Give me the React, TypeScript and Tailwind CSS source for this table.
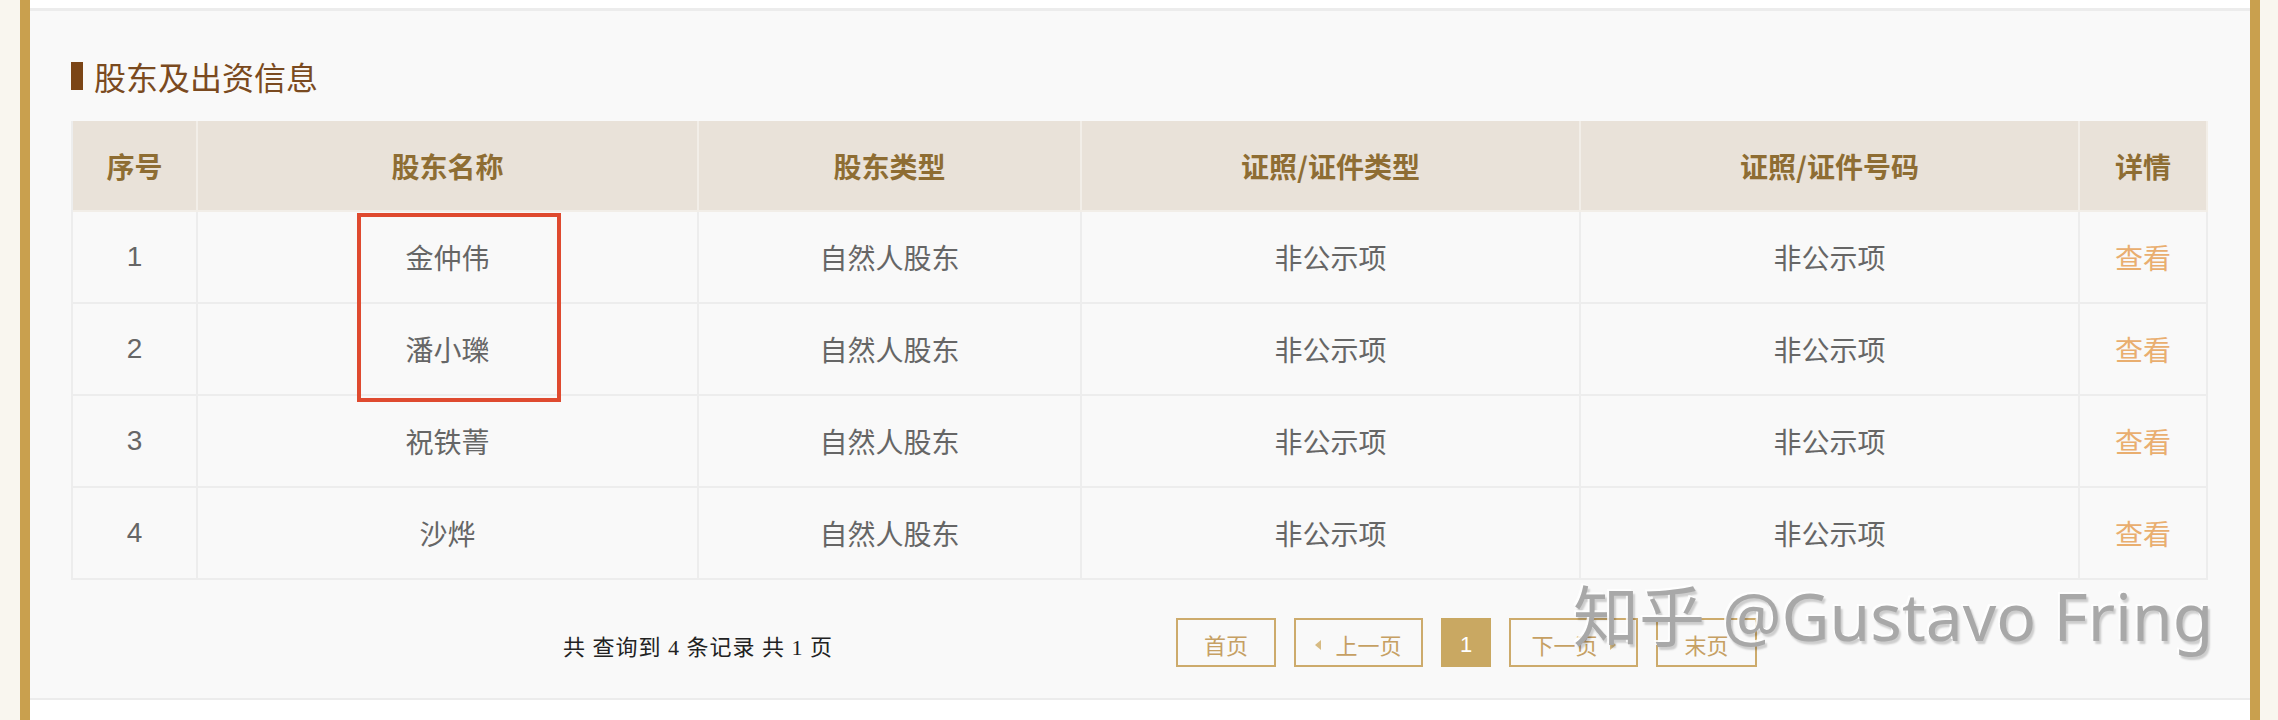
import React from "react";

const headers = ["序号", "股东名称", "股东类型", "证照/证件类型", "证照/证件号码", "详情"];
const rows = [
  ["1", "金仲伟"],
  ["2", "潘小瓅"],
  ["3", "祝铁菁"],
  ["4", "沙烨"],
];

function PrevTri() {
  return (
    <svg width="6" height="10" viewBox="0 0 6 10" className="mr-[14px]">
      <polygon points="6,0 0,5 6,10" fill="#d7bb83" />
    </svg>
  );
}
function NextTri() {
  return (
    <svg width="6" height="10" viewBox="0 0 6 10" className="ml-[12px]">
      <polygon points="0,0 6,5 0,10" fill="#d7bb83" />
    </svg>
  );
}

export default function App() {
  const cjk = { fontFamily: '"Noto Sans CJK SC", "Noto Sans", sans-serif' };
  return (
    <div className="relative flex h-[720px] w-[2278px] overflow-hidden bg-[#f9f6ef]" style={cjk}>
      <div className="w-[20px] shrink-0 bg-[#f9f6ef]" />
      <div className="w-[10px] shrink-0 bg-[#c9a04e]" />
      <div className="flex w-[2220px] shrink-0 flex-col bg-[#f9f9f9]">
        <div className="h-[8px] bg-white" />
        <div className="h-[3px] bg-[#ececec]" />
        <div className="flex h-[687px] flex-col px-[41px] pt-[50px]">
          <div className="flex h-[30px] items-center">
            <div className="h-[28px] w-[12px] bg-[#7b4516]" />
            <div className="ml-[11px] text-[32px] leading-[30px] text-[#7a4a20]">股东及出资信息</div>
          </div>
          <div className="relative mt-[30px] w-[2137px] border-l-2 border-[#ededed]">
            <div className="grid grid-cols-[125px_501px_383px_499px_499px_128px]">
              {headers.map((h) => (
                <div
                  key={h}
                  className="flex h-[91px] items-center justify-center border-r-2 border-b-2 border-[#f2eee8] bg-[#e9e2d9] text-[28px] font-bold text-[#8e6d33]"
                >
                  {h}
                </div>
              ))}
              {rows.map(([n, name]) => (
                <React.Fragment key={n}>
                  <div className="flex h-[92px] items-center justify-center border-r-2 border-b-2 border-[#ededed] text-[28px] text-[#666666]" style={{ fontFamily: '"Liberation Sans", Arial, sans-serif' }}>
                    {n}
                  </div>
                  <div className="flex h-[92px] items-center justify-center border-r-2 border-b-2 border-[#ededed] text-[28px] text-[#666666]">
                    {name}
                  </div>
                  <div className="flex h-[92px] items-center justify-center border-r-2 border-b-2 border-[#ededed] text-[28px] text-[#666666]">
                    自然人股东
                  </div>
                  <div className="flex h-[92px] items-center justify-center border-r-2 border-b-2 border-[#ededed] text-[28px] text-[#666666]">
                    非公示项
                  </div>
                  <div className="flex h-[92px] items-center justify-center border-r-2 border-b-2 border-[#ededed] text-[28px] text-[#666666]">
                    非公示项
                  </div>
                  <div className="flex h-[92px] items-center justify-center border-r-2 border-b-2 border-[#ededed] text-[28px] text-[#e9ae6f]">
                    查看
                  </div>
                </React.Fragment>
              ))}
            </div>
            <div className="absolute left-[284px] top-[92px] h-[189px] w-[204px] border-4 border-[#df4a2f]" />
          </div>
          <div className="mt-[38px] flex h-[49px] items-center pl-[492px]">
            <div className="w-[613px] pt-[10px] text-[22px] tracking-[1px] text-[#222222]" style={{ fontFamily: '"Liberation Serif", "Noto Sans CJK SC", serif' }}>
              共 查询到 4 条记录 共 1 页
            </div>
            <div className="flex gap-[18px] text-[22px] text-[#c6a063]">
              <div className="flex h-[49px] w-[100px] items-center justify-center border-2 border-[#cdab6c] pt-[4px]">首页</div>
              <div className="flex h-[49px] w-[129px] items-center justify-center border-2 border-[#cdab6c] pt-[4px]">
                <PrevTri />
                上一页
              </div>
              <div className="flex h-[49px] w-[50px] items-center justify-center bg-[#c9a862] pt-[4px] text-white" style={{ fontFamily: '"Liberation Sans", Arial, sans-serif' }}>1</div>
              <div className="flex h-[49px] w-[129px] items-center justify-center border-2 border-[#cdab6c] pt-[4px]">
                下一页
                <NextTri />
              </div>
              <div className="flex h-[49px] w-[101px] items-center justify-center border-2 border-[#cdab6c] pt-[4px]">末页</div>
            </div>
          </div>
        </div>
        <div className="h-[2px] bg-[#ececec]" />
        <div className="flex-1 bg-white" />
      </div>
      <div className="w-[10px] shrink-0 bg-[#c9a04e]" />
      <div className="flex-1 bg-[#f9f6ef]" />
      <div
        className="pointer-events-none absolute left-[1573px] top-[582px] whitespace-nowrap text-[66px] leading-none text-[#a8a8a8] [text-shadow:-2px_-2px_0_rgba(255,255,255,0.85),2px_3px_2px_rgba(0,0,0,0.18)]"
        style={{ fontFamily: '"Noto Sans", "Noto Sans CJK SC", sans-serif' }}
      >
        知乎 @Gustavo Fring
      </div>
    </div>
  );
}
